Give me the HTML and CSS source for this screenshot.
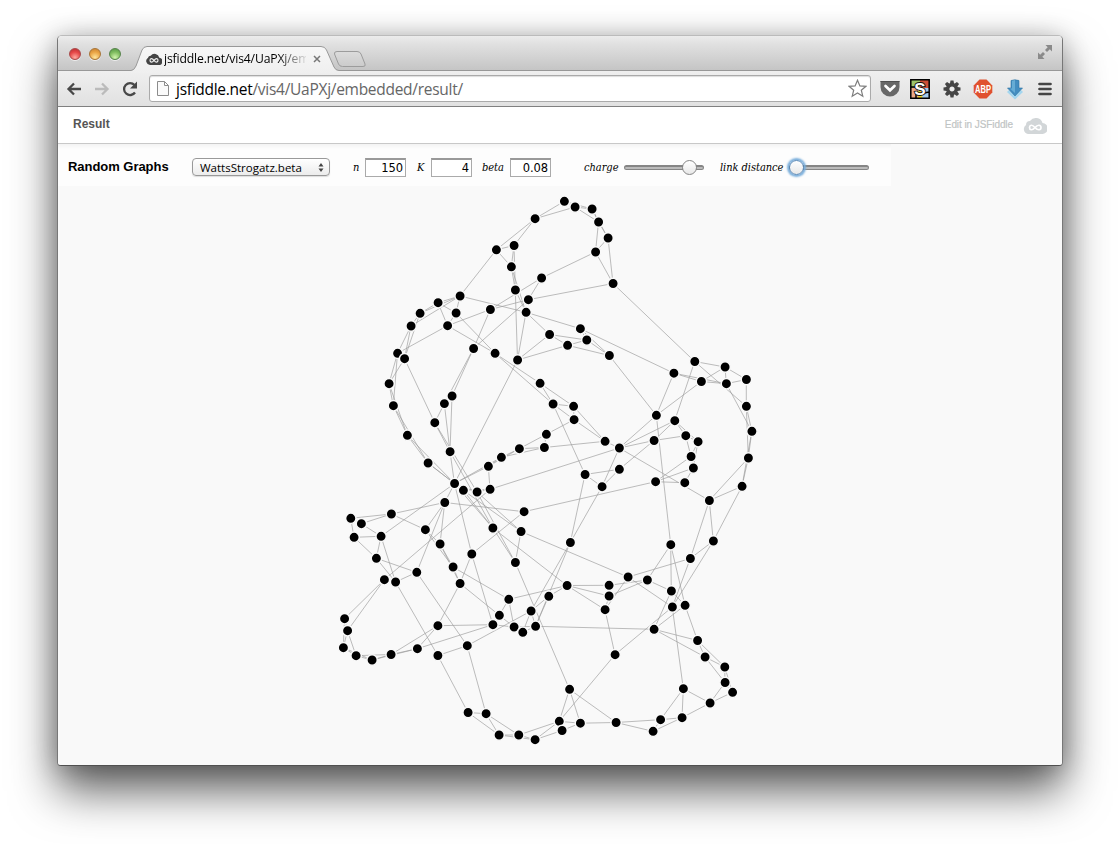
FILE: index.html
```html
<!DOCTYPE html>
<html lang="en">
<head>
<meta charset="utf-8">
<title>Random Graphs</title>
<link rel="stylesheet" href="styles.css">
</head>
<body>
<main class="window">
  <header class="titlebar">
    <div class="lights"><i class="light red"></i><i class="light amber"></i><i class="light green"></i></div>
    <div class="tab">
      <svg class="tab-shape" width="240" height="27" viewBox="0 0 240 27">
        <defs><linearGradient id="tabfill" x1="0" y1="0" x2="0" y2="1"><stop offset="0" stop-color="#f7f7f7"/><stop offset="1" stop-color="#efefef"/></linearGradient>
        <linearGradient id="newfill" x1="0" y1="0" x2="0" y2="1"><stop offset="0" stop-color="#dcdcdc"/><stop offset="1" stop-color="#cbcbcb"/></linearGradient></defs>
        <path d="M0 27V24.5Q3 24.500 5 20L11 4Q12.500 .5 16 .5H190Q194 .5 195.500 4L203 21Q204.500 24.500 208 24.500V27Z" fill="url(#tabfill)"/>
        <path d="M0 24.500Q3 24.500 5 20L11 4Q12.500 .5 16 .5H190Q194 .5 195.500 4L203 21Q204.500 24.500 208 24.500" fill="none" stroke="#989898"/>
        <path d="M206 5.500H226Q229 5.500 230 8L234 18Q235 20.500 232 20.500H211.500Q208.500 20.500 207.500 18L203.500 8Q203 5.500 206 5.500Z" fill="url(#newfill)" stroke="#9c9c9c"/>
      </svg>
      <div class="tab-content">
        <svg width="16" height="12" viewBox="0 0 24 18"><path d="M6 18A6 6 0 0 1 3 7A4 4 0 0 1 7 4A7.500 7.500 0 0 1 20 7A5.500 5.500 0 0 1 18 18Z" fill="#444"/><path d="M12 11C9 7 6 8 6 11S9 15 12 11S18 8 18 11S15 15 12 11Z" fill="none" stroke="#eee" stroke-width="1.700"/></svg>
        <span class="tab-title">jsfiddle.net/vis4/UaPXj/em</span>
        <svg class="close" width="8" height="8" viewBox="0 0 8 8"><path d="M1 1L7 7M7 1L1 7" stroke="#777" stroke-width="1.500"/></svg>
      </div>
    </div>
    <svg class="expand" width="16" height="16" viewBox="0 0 16 16"><path d="M8.500 1H15V7.500L12.800 5.300L10 8L8 6L10.700 3.200ZM7.500 15H1V8.500L3.200 10.700L6 8L8 10L5.300 12.800Z" fill="#8a8a8a"/></svg>
  </header>

  <nav class="toolbar">
    <svg class="back" width="16" height="14" viewBox="0 0 16 14"><path d="M8 1.500L2.500 7L8 12.500M2.500 7H15" fill="none" stroke="#484848" stroke-width="2.300"/></svg>
    <svg class="forward" width="16" height="14" viewBox="0 0 16 14"><path d="M8 1.500L13.500 7L8 12.500M13.500 7H1" fill="none" stroke="#bbb" stroke-width="2.300"/></svg>
    <svg class="reload" width="16" height="16" viewBox="0 0 16 16"><path d="M13 11.500A6 6 0 1 1 12.500 4" fill="none" stroke="#484848" stroke-width="2.300"/><path d="M15 .5V7.500H8Z" fill="#484848"/></svg>
    <div class="address">
      <svg width="12" height="15" viewBox="0 0 12 15"><path d="M.5.5H7.500L11.500 4.500V14.500H.5ZM7.500.5V4.500H11.500" fill="#fafafa" stroke="#8c8c8c"/></svg>
      <span class="url"><b>jsfiddle.net</b>/vis4/UaPXj/embedded/result/</span>
      <svg class="star" width="19" height="19" viewBox="0 0 19 19"><path d="M9.500 1.200L11.900 6.900L17.900 7.300L13.300 11.200L14.800 17.200L9.500 14L4.200 17.200L5.700 11.200L1.100 7.300L7.100 6.900Z" fill="#fff" stroke="#7e7e7e" stroke-width="1.200"/></svg>
    </div>
    <div class="extensions">
      <svg width="20" height="18" viewBox="0 0 20 18"><path d="M.5 1H19.500V7A9.500 9.500 0 0 1 .5 7Z" fill="#686868"/><path d="M.5 1.500H19.500" stroke="#505050"/><path d="M5.500 6L10 10.300L14.500 6" fill="none" stroke="#fff" stroke-width="2.700" stroke-linecap="round"/></svg>
      <svg width="20" height="20" viewBox="0 0 20 20"><path d="M1 1H10V9H1Z" fill="#9dc66b"/><path d="M10 1H19V9H10Z" fill="#cd4e36"/><path d="M1 9H8V19H1Z" fill="#ecaa89"/><path d="M8 12H14V19H8Z" fill="#f0d42c"/><path d="M14 9H19V19H12Z" fill="#a5cbed"/><path d="M.8.8H19.200V19.200H.8ZM1 8H5M14 14L19 13M6 19V14" fill="none" stroke="#000" stroke-width="1.500"/><text class="s-letter" x="10" y="16" text-anchor="middle">S</text></svg>
      <svg width="18" height="18" viewBox="-9 -9 18 18"><g fill="#454545"><path id="teeth" d="M-1.500-8.500H1.500L2.300-4H-2.300ZM-1.500 8.500H1.500L2.300 4H-2.300Z"/><use href="#teeth" transform="rotate(45)"/><use href="#teeth" transform="rotate(90)"/><use href="#teeth" transform="rotate(135)"/></g><circle r="4.300" fill="#ececec" stroke="#454545" stroke-width="3.400"/></svg>
      <svg width="20" height="20" viewBox="0 0 20 20"><path d="M6.500 .6H13.500L19.300 6.500V13.500L13.500 19.400H6.500L.7 13.500V6.500Z" fill="#e0512f"/><text class="abp" x="10" y="13.800" text-anchor="middle" textLength="16" lengthAdjust="spacingAndGlyphs">ABP</text></svg>
      <svg width="18" height="20" viewBox="0 0 18 20"><path d="M2 12L9 18.500L16 12" fill="none" stroke="#a4d6ef" stroke-width="3"/><path d="M5 1.500Q9 0 13 1.500V9H16.500L9 17L1.500 9H5Z" fill="#438dc0" stroke="#2c73a4" stroke-width=".6"/><path d="M6 2Q8 1 9 1V14L4 9.500H6Z" fill="#66acd5"/></svg>
      <svg width="14" height="14" viewBox="0 0 14 14"><path d="M1.500 2H12.500M1.500 7H12.500M1.500 12H12.500" stroke="#454545" stroke-width="2.700" stroke-linecap="round"/></svg>
    </div>
  </nav>

  <div class="result-bar">
    <strong>Result</strong>
    <span class="edit">Edit in JSFiddle</span>
    <svg class="cloud" width="24" height="17" viewBox="0 0 24 17"><path d="M5 17A5 5 0 0 1 3 8A4 4 0 0 1 7 4A7 7 0 0 1 19.500 6A5.500 5.500 0 0 1 19 17Z" fill="#d2d6d8"/><path d="M12 10.500C9 7 6.500 8 6.500 10.500S9 14 12 10.500S18 8 18 10.500S15 14 12 10.500Z" fill="none" stroke="#fff" stroke-width="1.700"/></svg>
  </div>

  <section class="page">
    <form class="controls">
      <h1>Random Graphs</h1>
      <div class="select"><span>WattsStrogatz.beta</span><svg width="6" height="9" viewBox="0 0 6 9"><path d="M3 0L5.500 3.500H.5ZM3 9L5.500 5.500H.5Z" fill="#444"/></svg></div>
      <label class="field n"><span>n</span><b>150</b></label>
      <label class="field k"><span>K</span><b>4</b></label>
      <label class="field beta"><span>beta</span><b>0.08</b></label>
      <div class="range charge"><span>charge</span><div class="track"><i></i></div></div>
      <div class="range distance"><span>link distance</span><div class="track"><i></i></div></div>
    </form>
    <svg class="graph" width="1004" height="579" viewBox="58 186 1004 579"><g id="links"></g><g id="nodes"></g></svg>
  </section>
</main>
<script src="graph.js"></script>
</body>
</html>
```
FILE: styles.css
```css
* { box-sizing: border-box; }
body { margin: 0; padding: 35px 57px 0; height: 844px; overflow: hidden; background: #fff; font-family: "Liberation Sans", Arial, sans-serif; }
svg { display: block; flex: none; }
.window { width: 1006px; height: 731px; border: 1px solid #777; border-top-color: #bbb; border-bottom-color: #505050; border-radius: 5px 5px 4px 4px; overflow: hidden; background: #f9f9f9; box-shadow: 0 25px 46px rgba(0,0,0,.62), 0 2px 26px rgba(0,0,0,.24); }
.titlebar { height: 35px; display: flex; align-items: flex-end; background: linear-gradient(#ececec, #e0e0e0 25%, #c5c5c5); border-bottom: 1px solid #989898; }
.lights { display: flex; gap: 8px; padding: 0 0 10px 11px; width: 73px; }
.light { width: 12px; height: 12px; border-radius: 50%; border: 1px solid #8b6b60; box-shadow: 0 1px 0 #eee; }
.red { background: radial-gradient(circle at 50% 85%, #ffaaa0, #e64848 55%, #b62b30); border-color: #a94a4a; }
.amber { background: radial-gradient(circle at 50% 85%, #ffe59c, #eaa546 55%, #c67e2e); border-color: #a87538; }
.green { background: radial-gradient(circle at 50% 85%, #d2f5ae, #80bd60 55%, #4f9342); border-color: #57844b; }
.tab { display: grid; width: 240px; height: 27px; margin-bottom: -3px; }
.tab-shape, .tab-content { grid-area: 1 / 1; }
.tab-content { display: flex; align-items: center; padding: 0 0 1px 15px; z-index: 1; height: 27px; }
.tab-title { width: 142px; margin: 0 7px 0 2px; font: 12.200px "Open Sans", "Noto Sans", sans-serif; line-height: 20px; white-space: nowrap; background: linear-gradient(90deg, #000 80%, #ddd 100%); color: transparent; -webkit-background-clip: text; background-clip: text; letter-spacing: -.15px; }
.expand { margin: 0 9px 10px auto; }
.toolbar { height: 36px; display: flex; align-items: center; background: linear-gradient(#efefef, #e1e1e1); border-bottom: 1px solid #808080; padding-left: 8px; }
.forward { margin-left: 12px; }
.reload { margin-left: 12px; }
.address { display: flex; align-items: center; width: 722px; height: 27px; margin-left: 11px; background: #fff; border: 1px solid #aaa; border-radius: 3px; padding: 0 3px 0 7px; box-shadow: inset 0 1px 1px #ddd; }
.url { font: 15.500px/24px "Open Sans", "Noto Sans", sans-serif; color: #666; margin-left: 7px; white-space: nowrap; letter-spacing: -.28px; }
.url b { color: #000; font-weight: 400; }
.star { margin-left: auto; }
.extensions { display: flex; align-items: center; margin-left: 9px; width: 172px; justify-content: space-between; }
.extensions svg { overflow: visible; }
.extensions svg:nth-child(n+2):nth-child(-n+5) { margin-left: -2px; margin-right: 2px; }
.s-letter { font: bold 17px "Liberation Sans", sans-serif; fill: #fff; stroke: #111; stroke-width: 1.800px; paint-order: stroke; }
.abp { font: bold 10.500px "Liberation Sans", sans-serif; fill: #fff; }
.result-bar { height: 37px; display: flex; align-items: center; background: #fff; border-bottom: 1px solid #c8c8c8; padding: 0 15px 2px; }
.result-bar strong { color: #555; font-size: 12px; }
.edit { margin: 1px 10px 0 auto; font-size: 10px; color: #bfc4c4; letter-spacing: -.08px; -webkit-text-stroke: .2px #bfc4c4; }
.cloud { margin-top: 3px; }
.page { background: #f9f9f9; height: 621px; }
.controls { display: flex; align-items: center; width: 833px; height: 42px; padding: 4px 0 0 10px; background: linear-gradient(#f3f3f3, #fdfdfd 5px); }
h1 { width: 124px; margin: 0; font-size: 13px; line-height: 18px; white-space: nowrap; letter-spacing: -.04px; }
.select { display: flex; align-items: center; justify-content: space-between; width: 138px; height: 18px; border: 1px solid #999; border-radius: 4px; background: linear-gradient(#fff, #ececec); padding: 0 5px 0 7px; font: 11.500px "Open Sans", sans-serif; box-shadow: 0 1px 1px #ddd; }
.select span { white-space: nowrap; }
.field { display: flex; align-items: center; justify-content: space-between; height: 19px; }
.field span, .range > span { font: italic 11px "DejaVu Serif Condensed", "DejaVu Serif", serif; white-space: nowrap; letter-spacing: -.05px; }
.field b { width: 41px; height: 19px; border: 1px solid #aaa; border-top: 2px solid #999; background: #fff; text-align: right; padding-right: 2px; font: 11.500px/16px "DejaVu Sans", sans-serif; letter-spacing: -.1px; }
.n { width: 53px; margin-left: 23px; }
.k { width: 55px; margin-left: 11px; }
.beta { width: 69px; margin-left: 10px; }
.range { display: flex; align-items: center; justify-content: space-between; }
.charge { width: 120px; margin-left: 33px; }
.distance { width: 149px; margin-left: 16px; }
.track { width: 80px; height: 5px; border: 1px solid #858585; border-top-width: 2px; border-radius: 3px; background: #bbb; display: flex; align-items: center; }
.track i { flex: none; width: 15px; height: 15px; border: 1px solid #858585; border-radius: 50%; background: linear-gradient(#fff, #e8e8e8); margin-left: 57px; }
.distance .track i { margin-left: -1px; border-color: #5686b6; box-shadow: 0 0 2px 2px #79aedb; }
#links line { stroke: #999; stroke-opacity: .65; stroke-width: 1; }
#nodes circle { fill: #000; stroke: #f9f9f9; stroke-width: 1.500; }
```
FILE: graph.js
```js
const nodes = `564.3,201.3 575,207 592,209 598.5,222 608,238 595.5,252 613,283.5 535,218.7 514,245.5 496.3,249.8
511.3,266.8 515.3,290 541.5,278 528.3,299.7 526,312.3 490.3,309.5 460,296 438,302.7 456,313 420,313.3
411,326 447.5,325.7 397.5,353.3 404.5,358.7 473.5,348.5 495,353.3 517.5,360 549.5,334.5 567.5,345.3 586.7,340
580.3,328.7 609.3,355.5 389,383.7 393.3,405.7 407.3,435.3 428,463 452,396 444.3,403.6 434.7,422.7 450,451.7
454.5,483.5 463.3,490.3 477,492 490,489.3 488.3,466.3 501.3,457.3 519.3,448.7 544.3,447.5 546.3,434.3 574,419.7
573.5,406.3 553,404 540,383.3 605,441.3 619.3,448 619.3,469.3 602,486.7 585,474.5 694.7,361.5 725,367
746.3,379.5 726.3,383.7 701.3,381.5 673.8,373.2 656.3,415.3 674.7,420.7 685.7,435.7 698,441.7 691,456.5 693.3,468
684.7,482.7 655.5,481.7 654,440.5 746.3,406.3 751.8,431.3 748.3,458 742,486.3 709.3,500.5 444.7,502.5 524,511.7
391.3,514 350.7,518.3 361.3,523.7 354,537.3 381,536.3 376.3,558.3 384.3,579.7 395.5,582 416.7,572.3 425.3,529.7
440,544 453,567 460,583.5 471.7,554 492.8,528 521,531.5 515.3,562.5 508.7,599.3 499.3,615.3 492.8,624.7
514,627 522.7,632.3 535.5,626.3 531,611 548.7,596.3 344.5,618.7 347.5,630.7 343.3,647.7 356,655.7 372,660
391,654.5 417.3,648.7 437.8,625.7 437.8,655.5 467.2,645.7 570.3,542.5 567,585.5 609,585.3 609,596 605,609.7
628,577 647.3,580 671.3,591 672.3,607 685,605.3 654,629.3 670.7,544.7 690.3,558.5 713.3,541 615,654.7
697.5,640.5 705,657 724.7,667 725,682.5 732.5,692.3 710,703 683.3,688.7 682,717.7 660.5,719.7 653,731.3
616,722.5 580.3,723.2 569.5,689.3 559.2,721.3 562,730.5 535,739.7 518.7,735 499,735 486,713.7 468,712.5`
  .split(/\s+/).map(p => p.split(',').map(Number));

// Each entry is a source followed by the indices it links to.
const links = `0:1,2,7 1:2,3,7 2:3,4 3:4,5 4:5,6 5:6,12 6:13,58 7:8,9 8:9,10,11 9:10,16 10:11,14 11:14,26
12:13,15 13:15,24 14:16,26,27,30 15:21,24 16:17,18,19,20 17:18,19,21 18:21,25 19:20,23 20:22,23 21:22,25
22:32,33 23:32,38 24:36,37 25:51,52 26:27,28,40 27:28,29 28:29,31 29:30,31 30:31,63 31:64 32:33,34 33:34,35
34:35,40 35:40,41 36:37,39 37:38,39 38:39,42 39:40,94 40:44,45,42,78,84,93,94 41:43,94,95 42:43,95,96 43:44,54,86
44:45,46 45:46,47 46:47,48 47:48,53 48:49 49:50,51,53 50:51,52,53 51:52,57 53:54 54:56,64,65,72,77 55:56,57,72
56:57,115 57:115 58:59,65,73 59:60,61,62 60:61,73 61:62,63,74 62:63,64 63:64 64:126 65:66,67,72 66:67,68,72
67:68,69 68:69,71 69:70,71 70:71 71:79 73:74,75 74:75,76 75:76,77 76:77,128 77:127,128 78:79,80,88,89,90
79:93 80:81,82,89 81:82,83 82:84 83:84,85 84:85,87 85:87,88 86:87,105,106 87:88,113 88:114 89:90,91 90:91,92
91:92,97 92:93,98,112 93:99 94:96,116 95:96,120 96:142 97:98,100,116 98:99,100 99:100,111,112 100:101,102
101:102,103 102:103,104,115,125 103:104,114,115 104:116 105:106,107 106:107,108 107:108,109 108:109,110
109:110,111 110:111,112 111:112 113:114,149 114:148 116:117,118,119 117:118,121 118:119,121 119:120,129
120:123,127 121:122,126 122:124,125,126 123:127,128,129,136 124:125,126,130 125:130,131 127:128 129:143
130:131,132 131:132,133 132:133,134 133:134,135 134:135 135:136,137 136:137,138 137:138,139 138:139,140
139:140 140:141,142 141:142,143,144 142:143 143:144,145,146 144:145 145:146,147 146:147,148 147:148,149 148:149`;

function draw(parent, tag, attrs) {
  const el = document.createElementNS('http://www.w3.org/2000/svg', tag);
  for (const key in attrs) el.setAttribute(key, attrs[key]);
  document.getElementById(parent).appendChild(el);
}

links.split(/\s+/).forEach(entry => {
  const [source, targets] = entry.split(':');
  const [x1, y1] = nodes[source];
  targets.split(',').forEach(t => draw('links', 'line', { x1, y1, x2: nodes[t][0], y2: nodes[t][1] }));
});
nodes.forEach(([cx, cy]) => draw('nodes', 'circle', { cx: cx + 0.1, cy, r: 5.2 }));
```
